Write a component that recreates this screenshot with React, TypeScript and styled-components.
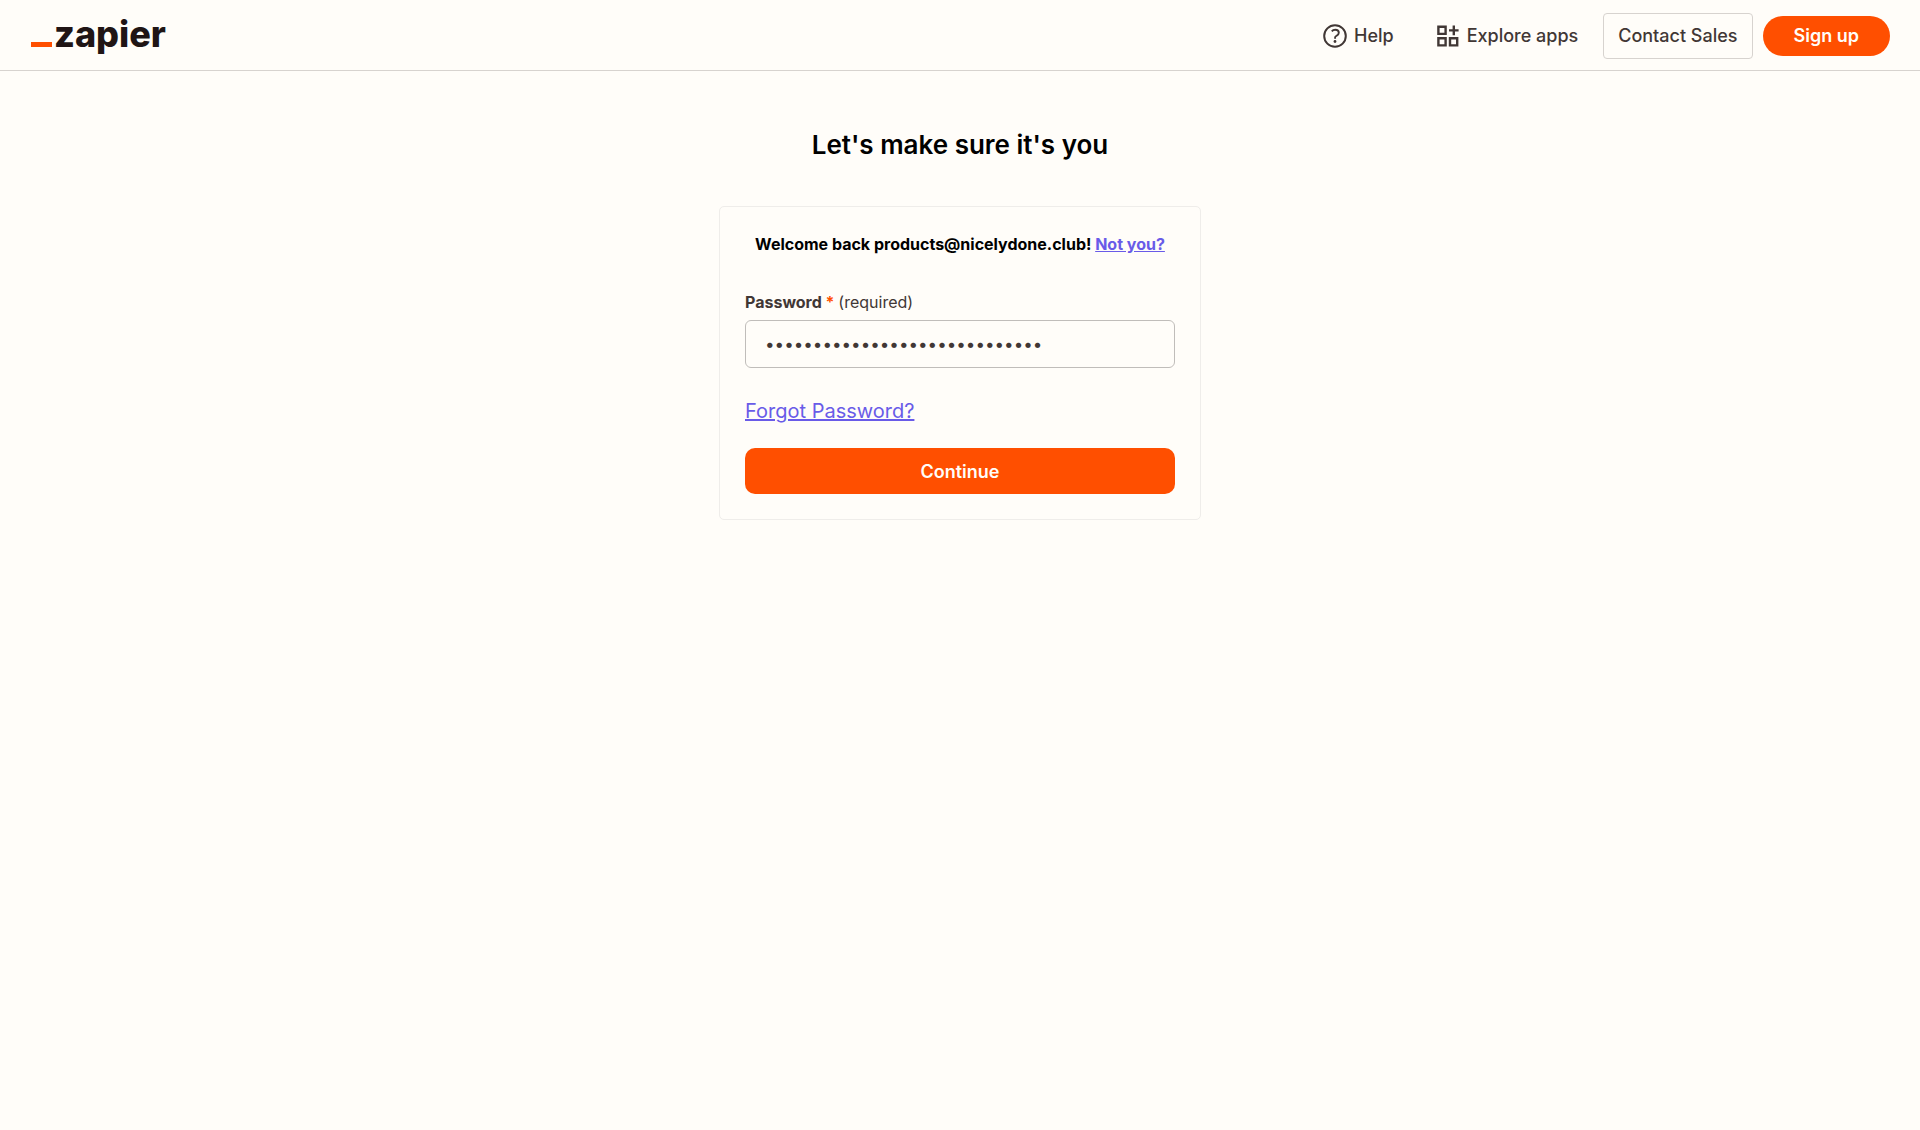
import React, { useState } from "react";
import styled, { createGlobalStyle } from "styled-components";

const color = {
  page: "#fffdf9",
  ink: "#413735",
  logo: "#201515",
  orange: "#ff4f00",
  link: "#695be8",
  line: "#d7d3cf",
  faint: "#efedea",
  field: "#c0bdba",
};

const GlobalStyle = createGlobalStyle`
  *, *::before, *::after { box-sizing: border-box; }
  body {
    margin: 0;
    background: ${color.page};
    color: ${color.ink};
    font-family: Inter, "Liberation Sans", sans-serif;
  }
`;

const Header = styled.header`
  display: flex;
  align-items: flex-start;
  justify-content: space-between;
  height: 71px;
  padding: 13px 30px 0 31px;
  border-bottom: 1px solid ${color.line};
`;

const Logo = styled.a`
  display: flex;
  align-items: baseline;
  gap: 2px;
  color: ${color.logo};
  font-size: 36px;
  line-height: 42px;
  font-weight: 800;
  text-decoration: none;
`;

const LogoDash = styled.span`
  width: 21px;
  height: 5px;
  background: ${color.orange};
`;

const Nav = styled.nav`
  display: flex;
  align-items: center;
`;

const NavLink = styled.a`
  display: flex;
  align-items: center;
  gap: 7px;
  margin-right: 43px;
  color: ${color.ink};
  font-size: 18px;
  line-height: 24px;
  font-weight: 500;
  text-decoration: none;

  & + & {
    gap: 8px;
    margin-right: 25px;
  }
`;

const ContactLink = styled.a`
  padding: 10px 14px;
  border: 1px solid ${color.line};
  border-radius: 4px;
  color: ${color.ink};
  font-size: 18px;
  line-height: 24px;
  font-weight: 500;
  text-decoration: none;
`;

const SignUpLink = styled.a`
  margin-left: 10px;
  padding: 8px 31px;
  border-radius: 24px;
  background: ${color.orange};
  color: ${color.page};
  font-size: 18px;
  line-height: 24px;
  font-weight: 600;
  text-decoration: none;
`;

const Main = styled.main`
  display: flex;
  flex-direction: column;
  align-items: center;
  padding: 56px 16px;
`;

const Title = styled.h1`
  margin: 0 0 44px;
  color: #000;
  font-size: 26px;
  line-height: 35px;
  font-weight: 600;
`;

const Card = styled.form`
  display: flex;
  flex-direction: column;
  width: 100%;
  max-width: 482px;
  padding: 25px;
  border: 1px solid ${color.faint};
  border-radius: 5px;
`;

const Welcome = styled.p`
  margin: 0 0 34px;
  color: #000;
  font-size: 16px;
  line-height: 24px;
  font-weight: 700;
  text-align: center;
`;

const TextLink = styled.a`
  color: ${color.link};
`;

const Label = styled.label`
  margin-bottom: 6px;
  font-size: 16px;
  line-height: 24px;
  font-weight: 700;
`;

const Star = styled.span`
  color: ${color.orange};
`;

const Hint = styled.span`
  font-weight: 400;
`;

const Field = styled.input`
  width: 100%;
  height: 48px;
  padding: 0 19px;
  border: 1px solid ${color.field};
  border-radius: 6px;
  outline: none;
  background: ${color.page};
  color: ${color.ink};
  font: 400 17px Inter, "Liberation Sans", sans-serif;
`;

const Forgot = styled(TextLink)`
  align-self: flex-start;
  margin: 28px 0 22px;
  font-size: 20px;
  line-height: 30px;
`;

const Continue = styled.button`
  height: 46px;
  border: 0;
  border-radius: 10px;
  background: ${color.orange};
  color: ${color.page};
  font: 600 18px Inter, "Liberation Sans", sans-serif;
  cursor: pointer;
`;

function HelpIcon() {
  return (
    <svg width="24" height="24" viewBox="0 0 24 24" fill="none" stroke={color.ink} aria-hidden="true">
      <circle cx="12" cy="12" r="10.8" strokeWidth="2" />
      <path d="M8.8 7.3C9.6 6.3 10.8 5.8 12.2 5.8c2.1 0 3.6 1.2 3.6 3 0 2.1-1.6 2.7-2.6 3.2-.8.4-1.1.8-1.1 1.6v1.2" strokeWidth="1.9" />
      <circle cx="12" cy="17.5" r="1.4" fill={color.ink} stroke="none" />
    </svg>
  );
}

function AppsIcon() {
  return (
    <svg width="22" height="22" viewBox="0 0 22 22" fill="none" stroke={color.ink} strokeWidth="2.4" aria-hidden="true">
      <path d="M1.4 1.7h7.2v7.2H1.4zM1.4 13.2h7.2v7.2H1.4zM13 13.2h7.2v7.2H13zM16.8 0.6v9.6M12 5.4h9.6" />
    </svg>
  );
}

export default function App() {
  const [password, setPassword] = useState("x".repeat(29));

  return (
    <>
      <GlobalStyle />
      <Header>
        <Logo href="#home">
          <LogoDash />
          zapier
        </Logo>
        <Nav>
          <NavLink href="#help">
            <HelpIcon />
            Help
          </NavLink>
          <NavLink href="#apps">
            <AppsIcon />
            Explore apps
          </NavLink>
          <ContactLink href="#sales">Contact Sales</ContactLink>
          <SignUpLink href="#signup">Sign up</SignUpLink>
        </Nav>
      </Header>
      <Main>
        <Title>Let's make sure it's you</Title>
        <Card onSubmit={(event) => event.preventDefault()}>
          <Welcome>
            Welcome back products@nicelydone.club! <TextLink href="#switch">Not you?</TextLink>
          </Welcome>
          <Label htmlFor="password">
            Password <Star>*</Star> <Hint>(required)</Hint>
          </Label>
          <Field
            id="password"
            type="password"
            required
            value={password}
            onChange={(event) => setPassword(event.target.value)}
          />
          <Forgot href="#forgot">Forgot Password?</Forgot>
          <Continue type="submit">Continue</Continue>
        </Card>
      </Main>
    </>
  );
}
